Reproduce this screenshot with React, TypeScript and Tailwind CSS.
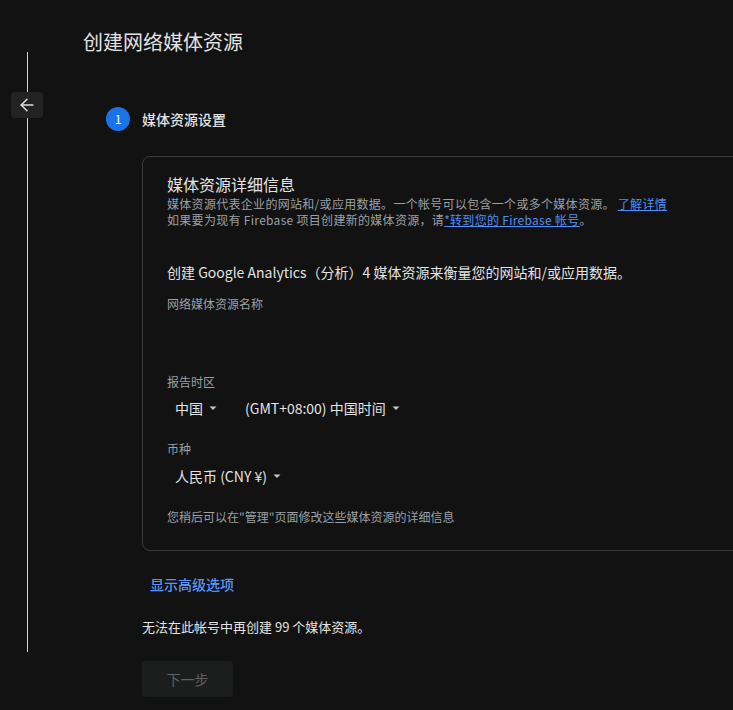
import { ArrowLeft } from 'lucide-react'

const font = { fontFamily: '"Noto Sans CJK SC", "Noto Sans", Roboto, sans-serif' }

function Select({ label }: { label: string }) {
  return (
    <div className="flex items-center gap-[6px] px-2 text-sm text-[#e3e3e3]">
      <span>{label}</span>
      <svg width="8" height="8" viewBox="0 0 8 8" className="text-[#c4c7c5]">
        <path d="M0.5 2.5h7L4 6z" fill="currentColor" />
      </svg>
    </div>
  )
}

export default function App() {
  return (
    <div className="relative h-[710px] w-[733px] overflow-hidden bg-[#121212]" style={font}>
      {/* left rail */}
      <div className="absolute left-[27px] top-[52px] h-[600px] w-px bg-[#d0d0d0]" />
      <button className="absolute left-[11px] top-[92px] flex h-[26px] w-[32px] items-center justify-center rounded-sm bg-[#232323] text-[#e0e0e0]">
        <ArrowLeft className="h-5 w-5" strokeWidth={1.75} />
      </button>

      <div className="pl-[83px] pt-[28px]">
        <h1 className="text-xl leading-[28px] text-[#e3e3e3]">创建网络媒体资源</h1>

        {/* step */}
        <div className="mt-[51px] flex items-center gap-[12px] pl-[23px]">
          <div className="flex h-6 w-6 items-center justify-center rounded-full bg-[#1b73e8] text-xs text-white">
            1
          </div>
          <span className="text-sm font-medium text-[#e3e3e3]">媒体资源设置</span>
        </div>

        <div className="pl-[59px]">
          {/* card */}
          <div className="mt-[25px] w-[640px] rounded-lg border border-[#3c3c3c] pb-[25px] pl-[24px] pt-[15px]">
            <h2 className="text-base leading-[24px] text-[#e3e3e3]">媒体资源详细信息</h2>
            <p className="text-xs leading-[16px] tracking-[0.3px] text-[#9aa0a6]">
              媒体资源代表企业的网站和/或应用数据。一个帐号可以包含一个或多个媒体资源。{' '}
              <span className="text-[#4d8ef7] underline">了解详情</span>
            </p>
            <p className="text-xs leading-[16px] tracking-[0.3px] text-[#9aa0a6]">
              如果要为现有 Firebase 项目创建新的媒体资源，请
              <span className="text-[#4d8ef7] underline">*转到您的 Firebase 帐号</span>。
            </p>

            <p className="mt-[34px] text-sm leading-[20px] text-[#e3e3e3]">
              创建 Google Analytics（分析）4 媒体资源来衡量您的网站和/或应用数据。
            </p>

            <p className="mt-[14px] text-xs leading-[16px] text-[#9aa0a6]">网络媒体资源名称</p>
            <div className="mt-[10px] h-[36px] w-[520px] bg-[#131313]" />

            <p className="mt-[16px] text-xs leading-[16px] text-[#9aa0a6]">报告时区</p>
            <div className="mt-[8px] flex items-center gap-[12px]">
              <Select label="中国" />
              <Select label="(GMT+08:00) 中国时间" />
            </div>

            <p className="mt-[23px] text-xs leading-[16px] text-[#9aa0a6]">币种</p>
            <div className="mt-[9px]">
              <Select label="人民币 (CNY ¥)" />
            </div>

            <p className="mt-[23px] text-xs leading-[16px] text-[#9aa0a6]">
              您稍后可以在"管理"页面修改这些媒体资源的详细信息
            </p>
          </div>

          <button className="mt-[23px] px-2 text-sm font-medium leading-[20px] text-[#5a95f5]">
            显示高级选项
          </button>

          <p className="mt-[22px] text-[13px] leading-[20px] text-[#e3e3e3]">
            无法在此帐号中再创建 99 个媒体资源。
          </p>

          <button className="mt-[24px] flex h-[36px] w-[91px] items-center justify-center rounded bg-[#1c1d1d] text-sm text-[#5f6368]">
            下一步
          </button>
        </div>
      </div>
    </div>
  )
}
